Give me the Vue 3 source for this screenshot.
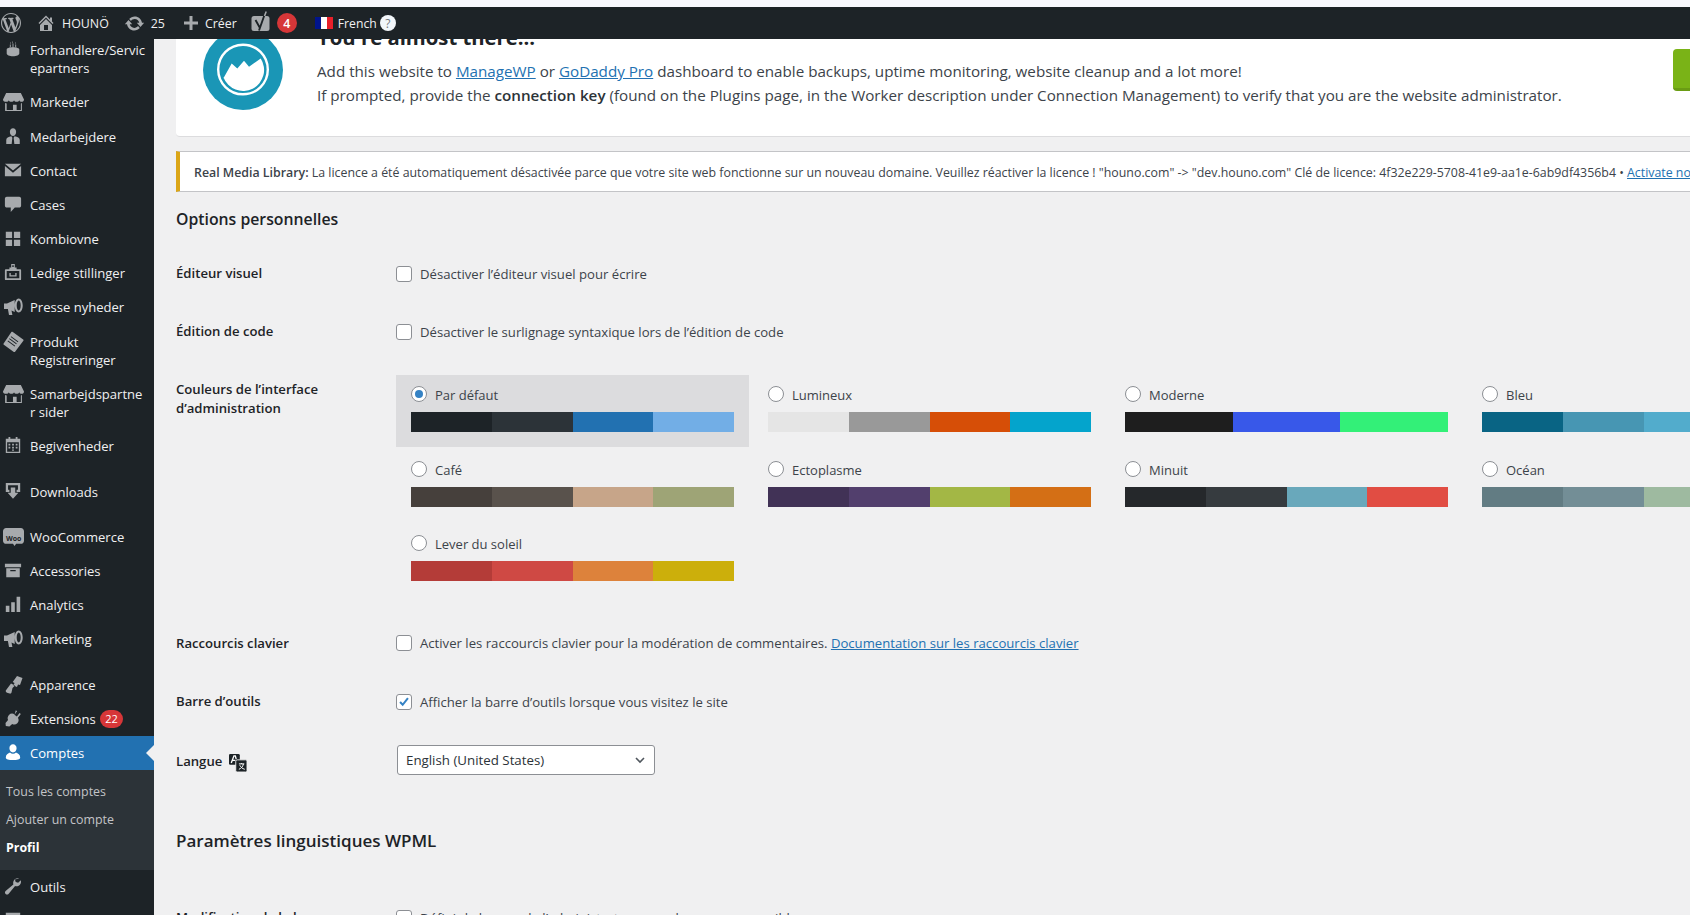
<script setup>
const icons = {
  cake: 'M9 1c.6.8.9 1.400.5 2.500H9zM7 2c.5.7.6 1.200.3 2.200h-.6zM12.500 2c.5.7.6 1.200.3 2.200h-.6zM6.500 5h1v3h-1zM9.500 4h1v4h-1zM12.500 5h1v3h-1zM10 8c4 0 7 1 7 2.600V15c0 1.700-3 3-7 3s-7-1.300-7-3v-4.400C3 9 6 8 10 8z',
  store: 'M3 2h14l3 6c0 1.300-1 2.200-2.300 2.200-1 0-1.900-.6-2.200-1.500-.3.9-1.300 1.500-2.500 1.500s-2.200-.6-2.500-1.500c-.3.9-1.300 1.500-2.500 1.500S5.800 9.600 5.500 8.700c-.3.900-1.200 1.500-2.200 1.500C1 10.200 0 9.300 0 8zM2 11.500c.5.200 1 .3 1.500.3V18h6v-5h3.500v5H17v-6.200c.4 0 .8-.1 1-.3V19H2z',
  business: 'M6.500 5.500C6.500 3.300 8 1.500 10 1.500s3.500 1.800 3.500 4-1.500 4.500-3.500 4.500-3.500-2.300-3.500-4.500zM2.500 19v-4.500c0-2.500 2.500-3.700 5.700-4.200L9.300 12l-.8 7zM17.500 19v-4.500c0-2.500-2.500-3.700-5.700-4.200L10.700 12l.8 7z',
  mail: 'M1 3h18L10 10.500zM1 5.500l9 7.500 9-7.500V17H1z',
  comment: 'M3 2h14c1 0 2 1 2 2v8c0 1-1 2-2 2h-5l-4.500 5v-5H3c-1 0-2-1-2-2V4c0-1 1-2 2-2z',
  grid: 'M2 3h7v7H2zM11 3h7v7h-7zM2 12h7v7H2zM11 12h7v7h-7z',
  badge: 'M8 1h4v4h2v2h4c.6 0 1 .4 1 1v10c0 .6-.4 1-1 1H2c-.6 0-1-.4-1-1V8c0-.6.4-1 1-1h4V5h2zM9.200 2.500v2h1.600v-2zM3 9v8h14V9zM6 11h1.500v2.500h5V11H14v4H6z',
  mega: 'M1 7.500h3l7.700-3.500v12L8.500 14.500l.9 4.500H6l-1.100-6H4H1zM15.700 2.500c-2.200 0-4 3.100-4 7s1.800 7 4 7 4-3.100 4-7-1.800-7-4-7zM15.700 4.500c1.100 0 2 2.200 2 5s-.9 5-2 5-2-2.200-2-5 .9-5 2-5z',
  tag: 'M9 .8l10.200 7.400c.4.300.5.8.2 1.200L11.500 19.700c-.3.400-.8.500-1.200.2L.8 13c-.4-.3-.5-.8-.2-1.200L8 1c.2-.3.7-.4 1-.2zM7.800 5L7.300 5.700 14.100 10.700 14.600 10zM6.300 7L5.800 7.700 12.600 12.700 13.100 12zM4.800 9L4.300 9.700 11.100 14.700 11.600 14z',
  cal: 'M5 1h2v2h6V1h2v2h3v16H2V3h3zM3.500 7v10.500h13V7zM5 8.500h2v2H5zM9 8.500h2v2H9zM13 8.500h2v2h-2zM5 12h2v2H5zM9 12h2v2H9zM13 12h2v2h-2zM9 15h2v1.500H9z',
  down: 'M2 1h16v10h-4V8.500h1.500v-5h-11v5H6V11H2zM7.500 6h5v6H16l-6 6.500L4 12h3.500z',
  woo: 'M3 2h14c1.700 0 3 1.300 3 3v9c0 1.700-1.300 3-3 3h-4.500l-1.500 2-1.500-2H3c-1.700 0-3-1.300-3-3V5c0-1.700 1.300-3 3-3z',
  box: 'M1 3h18v4H1zM2.500 8h15v10h-15zM7 10v1.500h6V10z',
  chart: 'M2 12h4v7H2zM8 8h4v11H8zM14 2h4v17h-4z',
  brush: 'M14 2l5.500 2-2.500 7-2-.5-1 2.500-3.500-1.500 1-2.500-1.800-.9zM8 9.500l4 2-2.500 2.500-1 4.500c-.2.800-1 1.300-1.800 1.100l-2.700-.8C3 18.100 2.500 17.200 2.800 16.400z',
  plug: 'M13.100 1.300l1.500 1.200-3 3.800 2.700 2 3-3.800 1.400 1.100-3.200 4c1.200 2 1 4.500-.7 6.300-1.500 1.500-3.800 1.800-5.700.8L6 19.500 2 19l-.3-3.500 2.800-3.200c-.9-1.900-.5-4.200 1-5.700 1.800-1.800 4.300-2 6.300-.6z',
  user: 'M10 1.500c2.300 0 4 1.900 4 4.300S12.300 10.500 10 10.500 6 8.200 6 5.800 7.700 1.500 10 1.500zM2 16c0-3 2.500-4.700 4.700-5.400.9.900 2 1.400 3.300 1.400s2.400-.5 3.300-1.400C15.500 11.300 18 13 18 16c0 2-3.500 3-8 3s-8-1-8-3z',
  wrench: 'M16.700 1.700c-2.500-.8-5.200.4-6.200 2.900-.5 1.200-.5 2.500-.1 3.600L1.800 15.500c-1 .9-1 2.400 0 3.300.9.900 2.300.9 3.200 0l7.300-8.700c1.200.4 2.500.3 3.600-.2 2.500-1.100 3.600-3.900 2.800-6.300l-3 2.900-2.700-.9-.8-2.700z',
  gear: 'M2 2h16v3H2zM2 7h16v3H2zM2 12h16v3H2z'
}

const menu = [
  { icon: 'cake', lines: ['Forhandlere/Servic', 'epartners'] },
  { icon: 'store', lines: ['Markeder'], tall: true },
  { icon: 'business', lines: ['Medarbejdere'] },
  { icon: 'mail', lines: ['Contact'] },
  { icon: 'comment', lines: ['Cases'] },
  { icon: 'grid', lines: ['Kombiovne'] },
  { icon: 'badge', lines: ['Ledige stillinger'] },
  { icon: 'mega', lines: ['Presse nyheder'], tall: true },
  { icon: 'tag', lines: ['Produkt', 'Registreringer'] },
  { icon: 'store', lines: ['Samarbejdspartne', 'r sider'] },
  { icon: 'cal', lines: ['Begivenheder'], sep: true },
  { icon: 'down', lines: ['Downloads'], sepShort: true },
  { icon: 'woo', lines: ['WooCommerce'], woo: true },
  { icon: 'box', lines: ['Accessories'] },
  { icon: 'chart', lines: ['Analytics'] },
  { icon: 'mega', lines: ['Marketing'], sep: true },
  { icon: 'brush', lines: ['Apparence'] },
  { icon: 'plug', lines: ['Extensions'], badge: '22' },
  { icon: 'user', lines: ['Comptes'], active: true },
  { icon: 'wrench', lines: ['Outils'] },
  { icon: 'gear', lines: ['Réglages'] }
]

const schemes = [
  { name: 'Par défaut', colors: ['#1d2327', '#2c3338', '#2271b1', '#72aee6'], selected: true },
  { name: 'Lumineux', colors: ['#e5e5e5', '#999999', '#d64e07', '#04a4cc'] },
  { name: 'Moderne', colors: ['#1e1e1e', '#3858e9', '#33f078'] },
  { name: 'Bleu', colors: ['#096484', '#4796b3', '#52accc', '#74b6ce'] },
  { name: 'Café', colors: ['#46403c', '#59524c', '#c7a589', '#9ea476'] },
  { name: 'Ectoplasme', colors: ['#413256', '#523f6d', '#a3b745', '#d46f15'] },
  { name: 'Minuit', colors: ['#25282b', '#363b3f', '#69a8bb', '#e14d43'] },
  { name: 'Océan', colors: ['#627c83', '#738e96', '#9ebaa0', '#aa9d88'] },
  { name: 'Lever du soleil', colors: ['#b43c38', '#cf4944', '#dd823b', '#ccaf0b'] }
]
</script>

<template>
  <div class="page">
    <div class="strip"></div>
    <header class="adminbar">
      <svg class="wp" viewBox="0 0 20 20"><path d="M20 10c0-5.510-4.490-10-10-10C4.480 0 0 4.490 0 10c0 5.520 4.480 10 10 10 5.510 0 10-4.480 10-10zM7.780 15.370L4.370 6.220c.55-.02 1.170-.08 1.170-.08.5-.06.44-1.130-.06-1.110 0 0-1.450.11-2.370.11-.18 0-.37 0-.58-.01C4.120 2.690 6.870 1.110 10 1.110c2.330 0 4.450.87 6.050 2.340-.68-.11-1.650.39-1.650 1.580 0 .74.45 1.360.9 2.100.35.61.55 1.360.55 2.460 0 1.490-1.400 5-1.400 5l-3.030-8.370c.54-.02.82-.17.82-.17.5-.05.44-1.250-.06-1.220 0 0-1.440.12-2.380.12-.87 0-2.330-.12-2.330-.12-.5-.03-.56 1.200-.06 1.220l.92.08 1.260 3.410zM17.410 10c.24-.64.74-1.870.43-4.250.7 1.290 1.050 2.710 1.050 4.250 0 3.290-1.730 6.240-4.400 7.780.97-2.590 1.940-5.200 2.920-7.780zM6.100 18.090C3.120 16.650 1.110 13.530 1.110 10c0-1.300.23-2.480.72-3.590C3.250 10.300 4.670 14.200 6.100 18.090zm4.030-6.630l2.580 6.980c-.86.29-1.760.45-2.710.45-.79 0-1.570-.11-2.290-.33.81-2.380 1.620-4.740 2.420-7.100z"/></svg>
      <svg class="ab-home" viewBox="0 0 20 20"><path d="M16 8.500l1.530 1.530-1.060 1.060L10 4.620l-6.470 6.470-1.060-1.060L10 2.500l4 4v-2h2v4zm-6-2.460l6 5.990V18H4v-5.970zM12 17v-5H8v5h4z"/></svg>
      <span class="ab-site">HOUNÖ</span>
      <svg class="ab-update" viewBox="0 0 20 20"><path d="M10.200 3.280c3.530 0 6.430 2.610 6.920 6h2.080l-3.500 4-3.500-4h2.320c-.45-1.970-2.210-3.450-4.320-3.450-1.450 0-2.730.71-3.540 1.780L4.950 5.660C6.230 4.200 8.110 3.280 10.200 3.280zm-.4 13.440c-3.520 0-6.430-2.610-6.920-6H.8l3.500-4c1.170 1.330 2.330 2.670 3.500 4H5.480c.45 1.970 2.210 3.450 4.320 3.450 1.450 0 2.730-.71 3.540-1.780l1.710 1.950c-1.280 1.460-3.150 2.380-5.250 2.380z"/></svg>
      <span class="ab-count">25</span>
      <svg class="ab-plus" viewBox="0 0 14 14"><path d="M5.500 0h3v5.500H14v3H8.500V14h-3V8.500H0v-3h5.500z"/></svg>
      <span class="ab-new">Créer</span>
      <svg class="ab-yoast" viewBox="0 0 19 22">
        <rect x="0.500" y="5" width="18" height="15" rx="2.500"/>
        <path class="yoast-y" d="M4.500 9l4.200 7.500M14.500 1L8 19.500"/>
        <path class="yoast-slash" d="M15.200 0.500L13.500 5"/>
      </svg>
      <span class="ab-badge">4</span>
      <span class="flag"><i class="f1"></i><i class="f2"></i><i class="f3"></i></span>
      <span class="ab-lang">French</span>
      <span class="ab-help">?</span>
    </header>

    <div class="body">
      <nav class="sidebar">
        <ul class="menu">
          <template v-for="item in menu" :key="item.lines[0]">
            <li class="item" :class="{ active: item.active, sep: item.sep, tall: item.tall, 'sep-short': item.sepShort }">
              <span class="ico">
                <svg viewBox="0 0 20 20" :class="'i-' + item.icon"><path fill-rule="evenodd" :d="icons[item.icon]"/></svg>
                <span v-if="item.woo" class="woo-label">Woo</span>
              </span>
              <span class="label">
                <span v-for="l in item.lines" :key="l" class="line">{{ l }}</span>
              </span>
              <span v-if="item.badge" class="pill">{{ item.badge }}</span>
            </li>
            <ul v-if="item.active" class="submenu">
              <li>Tous les comptes</li>
              <li>Ajouter un compte</li>
              <li class="current">Profil</li>
            </ul>
          </template>
        </ul>
      </nav>

      <main class="content">
        <section class="card">
          <div class="logo">
            <svg viewBox="0 0 80 80">
              <circle cx="40" cy="40" r="40" fill="#1a96b6"/>
              <circle cx="40" cy="39.500" r="24.800" fill="none" stroke="#fff" stroke-width="2.400"/>
              <path d="M20 49L28.700 33.500 34.300 38.500 41 30.800 46 36.800 57.700 28.500A21 21 0 1 1 20.500 47.500Z" fill="#fff"/>
            </svg>
          </div>
          <div class="card-text">
            <h2>You're almost there...</h2>
            <p>Add this website to <a>ManageWP</a> or <a>GoDaddy Pro</a> dashboard to enable backups, uptime monitoring, website cleanup and a lot more!</p>
            <p>If prompted, provide the <b>connection key</b> (found on the Plugins page, in the Worker description under Connection Management) to verify that you are the website administrator.</p>
          </div>
          <div class="green"></div>
        </section>

        <div class="notice"><b>Real Media Library:</b> La licence a été automatiquement désactivée parce que votre site web fonctionne sur un nouveau domaine. Veuillez réactiver la licence ! "houno.com" -&gt; "dev.houno.com" Clé de licence: 4f32e229-5708-41e9-aa1e-6ab9df4356b4 • <a>Activate now</a></div>

        <h2 class="h-options">Options personnelles</h2>

        <div class="row r-visual">
          <div class="th">Éditeur visuel</div>
          <div class="td"><span class="cb"></span><span>Désactiver l’éditeur visuel pour écrire</span></div>
        </div>
        <div class="row r-code">
          <div class="th">Édition de code</div>
          <div class="td"><span class="cb"></span><span>Désactiver le surlignage syntaxique lors de l’édition de code</span></div>
        </div>
        <div class="row r-colors">
          <div class="th">Couleurs de l’interface d’administration</div>
          <div class="schemes">
            <div v-for="s in schemes" :key="s.name" class="scheme" :class="{ selected: s.selected }">
              <div class="scheme-head"><span class="radio" :class="{ on: s.selected }"></span><span class="scheme-name">{{ s.name }}</span></div>
              <div class="swatch"><i v-for="c in s.colors" :key="c" :style="{ background: c }"></i></div>
            </div>
          </div>
        </div>
        <div class="row r-keys">
          <div class="th">Raccourcis clavier</div>
          <div class="td"><span class="cb"></span><span>Activer les raccourcis clavier pour la modération de commentaires. <a>Documentation sur les raccourcis clavier</a></span></div>
        </div>
        <div class="row r-bar">
          <div class="th">Barre d’outils</div>
          <div class="td">
            <span class="cb checked"><svg viewBox="0 0 16 16"><path d="M3.500 8l3 3.200L12.500 3.500" fill="none" stroke="#3582c4" stroke-width="2.300"/></svg></span>
            <span>Afficher la barre d’outils lorsque vous visitez le site</span>
          </div>
        </div>
        <div class="row r-lang">
          <div class="th th-lang">Langue
            <svg class="trans" viewBox="0 0 20 20">
              <rect x="0" y="0" width="12" height="12" rx="1.500" fill="#1d2327"/>
              <rect x="7.500" y="6.500" width="12.500" height="13.500" rx="1.500" fill="#1d2327" stroke="#f0f0f1"/>
              <path d="M2.500 10l3-8h1.500L8 5.500M3.800 7h3.200" fill="none" stroke="#fff" stroke-width="1.500"/>
              <path d="M11 11h6M14 10v1M16 11c-.5 3-2.500 5-5 6M12 12.500c.8 2 2.800 3.800 5.500 4.500" fill="none" stroke="#fff" stroke-width="1.100"/>
            </svg>
          </div>
          <div class="select">
            <span>English (United States)</span>
            <svg viewBox="0 0 20 20"><path d="M5 7.500l5 5 5-5" fill="none" stroke="#50575e" stroke-width="2"/></svg>
          </div>
        </div>
        <h2 class="h-wpml">Paramètres linguistiques WPML</h2>
        <div class="row r-last">
          <div class="th">Modification de la langue</div>
          <div class="td"><span class="cb"></span><span>Définir la langue de l’administrateur pour les pages accessibles</span></div>
        </div>
      </main>
    </div>
  </div>
</template>

<style>
html, body { margin: 0; height: 100%; overflow: hidden; background: #f0f0f1; }
</style>

<style scoped>
* { box-sizing: border-box; }
.page {
  width: 1690px; height: 915px; overflow: hidden; display: flex; flex-direction: column;
  font-family: "Open Sans", "Noto Sans", sans-serif; font-size: 13.150px; color: #3c434a; background: #f0f0f1;
}
.strip { height: 7px; background: #f9f9fe; flex: none; }
.adminbar {
  height: 32px; flex: none; background: #1d2327; display: flex; align-items: center;
  position: relative; z-index: 5; color: #f0f0f1; font-size: 12.400px;
}
.adminbar svg { fill: #a7aaad; flex: none; }
.wp { width: 20px; height: 20px; margin-left: 1px; }
.ab-home { width: 20px; height: 20px; margin-left: 15px; }
.ab-site { margin-left: 6px; }
.ab-update { width: 21px; height: 21px; margin-left: 15px; }
.ab-count { margin-left: 6px; }
.ab-plus { width: 14px; height: 14px; margin-left: 19px; }
.ab-new { margin-left: 7px; }
.ab-yoast { width: 19px; height: 22px; margin-left: 14px; margin-bottom: 2px; }
.yoast-y { fill: none; stroke: #1d2327; stroke-width: 1.900; }
.yoast-slash { fill: none; stroke: #a7aaad; stroke-width: 1.500; }
.ab-badge {
  width: 20px; height: 20px; border-radius: 50%; background: #d63638; color: #fff; margin-left: 7px;
  display: flex; align-items: center; justify-content: center; font-weight: 600;
}
.flag { display: flex; width: 18px; height: 12px; margin-left: 18px; }
.flag i { flex: 1; }
.f1 { background: #00148c; } .f2 { background: #fff; } .f3 { background: #e8202a; }
.ab-lang { margin-left: 5px; font-size: 12.200px; }
.ab-help {
  width: 16px; height: 16px; border-radius: 50%; background: #f2f6fa; color: #72777c; margin-left: 3px;
  display: flex; align-items: center; justify-content: center; font-size: 12px;
}

.body { flex: 1; display: flex; min-height: 0; }
.sidebar { width: 154px; flex: none; background: #1d2327; overflow: hidden; font-size: 13.050px; }
.menu { list-style: none; margin: -6px 0 0; padding: 0; }
.item {
  display: flex; align-items: flex-start; padding: 8px 4px 8px 30px; position: relative;
  line-height: 18px; color: #f0f0f1; min-height: 34px;
}
.item.tall { min-height: 35px; padding-bottom: 9px; }
.item.sep { margin-bottom: 12px; }
.item.sep-short { margin-bottom: 11px; }
.ico { position: absolute; left: 2px; top: 6px; width: 22px; height: 20px; display: flex; align-items: center; justify-content: center; }
.ico svg { width: 18px; height: 18px; fill: #a7aaad; }
.ico .i-store, .ico .i-woo, .ico .i-tag { width: 21px; height: 21px; }
.ico .i-mega, .ico .i-brush { width: 20px; height: 20px; }
.woo-label { position: absolute; font-size: 7px; font-weight: 700; color: #1d2327; top: 4px; left: 4px; }
.line { display: block; white-space: nowrap; }
.pill {
  position: absolute; left: 100px; top: 8px; width: 23px; height: 18px; border-radius: 9px; background: #d63638;
  color: #fff; font-size: 11px; display: flex; align-items: center; justify-content: center;
}
.item.active { background: #2271b1; color: #fff; }
.item.active .ico svg { fill: #fff; }
.item.active::after {
  content: ""; position: absolute; right: 0; top: 9px; border: 8px solid transparent; border-right-color: #f0f0f1; border-left-width: 0;
}
.submenu { list-style: none; margin: 0; padding: 8px 0 8px; background: #2c3338; height: 100px; }
.submenu li { line-height: 28px; padding-left: 6px; color: #c3c4c7; font-size: 12.400px; }
.submenu .current { color: #fff; font-weight: 700; }

.content { flex: 1; min-width: 0; padding-left: 22px; overflow: hidden; }
.card {
  height: 118px; margin-top: -20px; background: #fff; border-bottom: 1px solid #dcdcde; border-bottom-left-radius: 4px;
  display: flex; position: relative; padding-left: 27px;
}
.logo { width: 80px; height: 80px; margin-top: 11px; flex: none; }
.logo svg { display: block; }
.card-text { margin-left: 34px; }
.card-text h2 { margin: 0; font-size: 20.300px; line-height: 24px; font-weight: 700; color: #1d2327; margin-top: 6px; }
.card-text p { margin: 0; font-size: 15.190px; line-height: 24px; white-space: nowrap; }
.card-text h2 + p { margin-top: 9.500px; }
.card-text b { font-weight: 600; color: #2c3338; }
a { color: #2271b1; text-decoration: underline; }
.green {
  position: absolute; left: 1497px; top: 30px; width: 80px; height: 42px; border-radius: 4px;
  background: #7ab317; border-bottom: 3px solid #6a9c14;
}
.notice {
  margin-top: 14px; height: 41px; background: #fff; border: 1px solid #c3c4c7; border-width: 1px 0; border-left: 4px solid #dba617;
  display: block; padding-left: 14px; line-height: 41px; font-size: 12.360px; white-space: nowrap; width: 1600px; overflow: hidden;
}
.notice b { font-weight: 600; color: #3c434a; }

h2 { font-weight: 600; color: #1d2327; margin: 0; }
.h-options { font-size: 15.800px; line-height: 20px; margin-top: 17px; }
.h-wpml { font-size: 17px; line-height: 22px; margin-top: 55px; }

.row { display: flex; align-items: flex-start; }
.th { width: 220px; flex: none; font-weight: 600; color: #1d2327; line-height: 19px; }
.td { display: flex; align-items: center; gap: 8px; line-height: 20px; }
.cb {
  width: 16px; height: 16px; flex: none; background: #fff; border: 1px solid #8c8f94; border-radius: 3px; display: block;
}
.cb svg { display: block; width: 14px; height: 14px; }
.r-visual { margin-top: 35px; }
.r-code { margin-top: 38px; }
.r-colors { margin-top: 37px; }
.r-colors .th { width: 220px; padding-right: 40px; padding-top: 1px; }
.schemes {
  margin-top: -4px; display: grid; grid-template-columns: repeat(4, 353px); column-gap: 4px; grid-auto-rows: 72px; row-gap: 2.500px; flex: none; font-size: 13px;
}
.scheme { padding: 10px 15px 15px; }
.scheme.selected { background: #dcdcde; }
.scheme-head { display: flex; align-items: center; gap: 8px; height: 18px; margin-bottom: 9px; line-height: 18px; }
.scheme-name { padding-top: 2px; }
.radio { width: 16px; height: 16px; border-radius: 50%; border: 1px solid #8c8f94; background: #fff; position: relative; flex: none; }
.radio.on::after { content: ""; position: absolute; left: 3px; top: 3px; width: 8px; height: 8px; border-radius: 50%; background: #3582c4; }
.swatch { display: flex; height: 20px; }
.swatch i { flex: 1; }
.r-keys { margin-top: 38px; }
.r-keys .td { margin-top: -1px; }
.r-bar { margin-top: 39px; }
.r-lang { margin-top: 34px; }
.select {
  width: 258px; height: 30px; margin-left: 1px; margin-top: -1px; background: #fff; border: 1px solid #8c8f94; border-radius: 3px;
  display: flex; align-items: center; justify-content: space-between; padding: 0 6px 0 8px; font-size: 13.300px; color: #2c3338;
}
.select svg { width: 16px; height: 16px; }
.th-lang { display: flex; align-items: center; gap: 6px; padding-top: 5px; }
.trans { width: 20px; height: 18px; margin-top: 3px; }
.r-last { margin-top: 56px; }
</style>
